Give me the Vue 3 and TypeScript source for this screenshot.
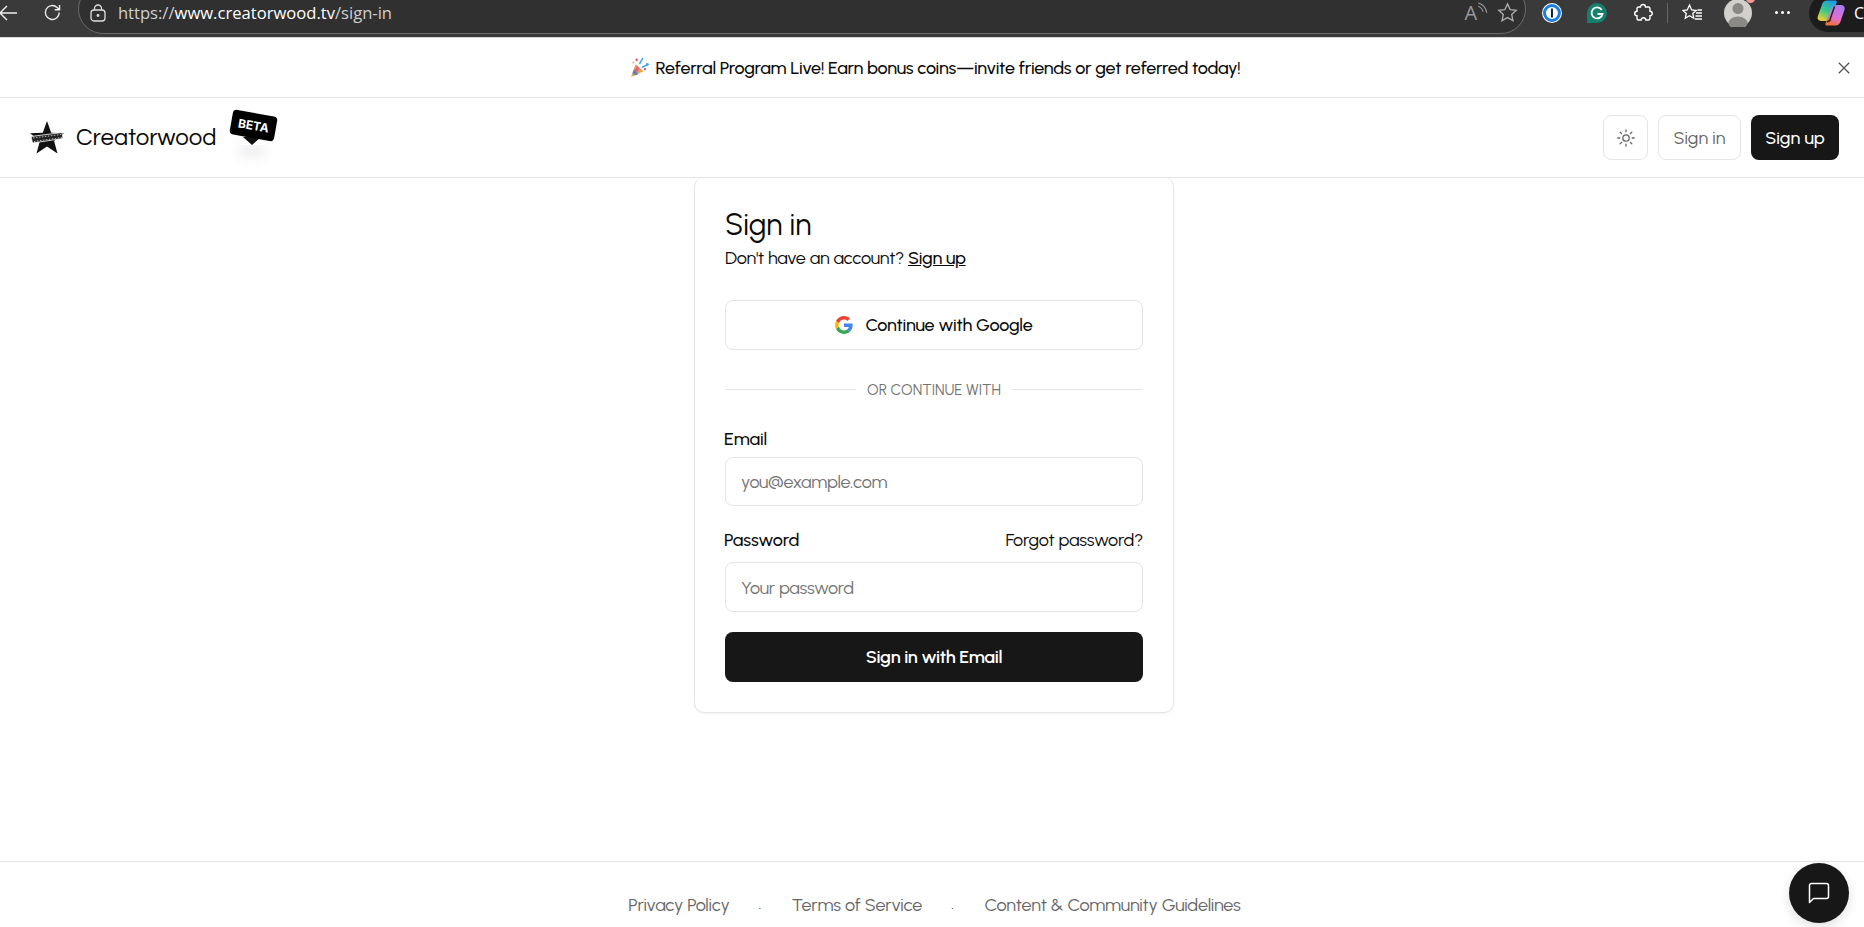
<script setup lang="ts">
const footerLinks: string[] = ['Privacy Policy', 'Terms of Service', 'Content & Community Guidelines']
</script>

<template>
  <div class="page">
    <header class="browser">
      <svg class="b-back" width="19" height="16" viewBox="0 0 19 16" fill="none" stroke="#eee" stroke-width="1.4"><path d="M18 8H1M8 1 1 8l7 7" /></svg>
      <svg class="b-reload" width="19" height="19" viewBox="0 0 18 18" fill="none" stroke="#eee" stroke-width="1.3"><path d="M15.4 9A6.6 6.6 0 1 1 13.3 4.200L15.500 6.200M15.700 1.800v4.600h-4.600" /></svg>
      <div class="address">
        <svg width="16" height="18" viewBox="0 0 16 18" fill="none" stroke="#ddd" stroke-width="1.3"><rect x="1" y="6" width="14" height="11" rx="3" /><path d="M4.500 6V4.500a3.500 3.500 0 0 1 7 0V6" /><circle cx="8" cy="11.500" r=".8" fill="#ddd" /></svg>
        <span class="url"><span class="dim">https://</span>www.creatorwood.tv<span class="dim">/sign-in</span></span>
        <span class="read">A<svg width="11" height="13" viewBox="0 0 10 12" fill="none" stroke="#999" stroke-width="1"><path d="M1 1c4 1 7 4 8 9M1 4c2 .7 3.800 2.500 4.500 5" /></svg></span>
        <svg width="21" height="21" viewBox="0 0 20 20" fill="none" stroke="#aaa" stroke-width="1.300"><path d="m10 1.800 2.500 5.400 5.800.7-4.300 4 1.200 5.800-5.200-2.900-5.200 2.900 1.200-5.800-4.300-4 5.800-.7z" /></svg>
      </div>
      <svg class="b-pass" width="20" height="20" viewBox="0 0 20 20"><circle cx="10" cy="10" r="10" fill="#fff" /><circle cx="10" cy="10" r="7.500" fill="none" stroke="#1a7de0" stroke-width="3" /><rect x="9" y="5.500" width="2" height="9" fill="#123" /></svg>
      <svg class="b-gram" width="20" height="20" viewBox="0 0 20 20"><path d="M10 0a10 10 0 1 1 0 20H0V10A10 10 0 0 1 10 0z" fill="#15806b" /><path d="M14.800 7A5.500 5.500 0 1 0 15.500 11H10.500" fill="none" stroke="#fff" stroke-width="1.800" /></svg>
      <svg class="b-ext" width="20" height="20" viewBox="0 0 20 20" fill="none" stroke="#fff" stroke-width="1.400"><path d="M7.500 4a2.500 2.500 0 0 1 5 0h3a1.500 1.500 0 0 1 1.500 1.500v2.700a2.300 2.300 0 0 1 0 4.600v2.700a1.500 1.500 0 0 1-1.500 1.500h-2.700a2.300 2.300 0 0 0-4.600 0H5.500A1.500 1.500 0 0 1 4 15.500v-2.700a2.300 2.300 0 0 1 0-4.600V5.500A1.500 1.500 0 0 1 5.500 4z" /></svg>
      <span class="b-div"></span>
      <svg class="b-fav" width="21" height="20" viewBox="0 0 21 20" fill="none" stroke="#fff" stroke-width="1.300"><path d="M7.500 2 9.700 7l4.500.5-3.400 3 1 4.800-4.300-2.500-4.200 2.500 1-4.800L1 7.500 5.300 7z" /><path d="M14 10h6M13.500 13h6.500M13 16h7M15.500 7h4.500" /></svg>
      <div class="b-avatar">
        <svg width="28" height="28" viewBox="0 0 28 28"><circle cx="14" cy="14" r="14" fill="#d2d0cd" /><circle cx="14" cy="9.500" r="5.500" fill="#8b8985" /><ellipse cx="14" cy="24" rx="9.500" ry="6.500" fill="#8b8985" /></svg>
        <span class="b-dot"></span>
      </div>
      <span class="b-more"><i></i><i></i><i></i></span>
      <div class="copilot">
        <svg width="28" height="26" viewBox="0 0 28 26"><defs><linearGradient id="c1" x1="0.700" y1="0" x2="0.200" y2="1"><stop offset="0" stop-color="#1f9be8" /><stop offset=".5" stop-color="#35c98a" /><stop offset="1" stop-color="#f5cf2e" /></linearGradient><linearGradient id="c2" x1="0.700" y1="0" x2="0.300" y2="1"><stop offset="0" stop-color="#a77cf2" /><stop offset=".6" stop-color="#e36ed0" /><stop offset="1" stop-color="#f0702f" /></linearGradient></defs><path d="M10 .5h8.500c1.200 0 1.500 1 1 2.200L14 18.800c-.6 1.500-1.600 2.200-3 2.200H4.500C1.500 21 0 19 .8 16.300L5 4.500C5.800 2 7.500.5 10 .5z" fill="url(#c1)" /><path d="M20.500 5H24c2.800 0 4.300 2 3.500 4.700l-4 11.800c-.8 2.800-2.500 4-5 4h-9c-1.200 0-1.400-1-1-2.200L14.500 8c.8-2 3-3 6-3z" fill="url(#c2)" /><path d="M17.500 6.500 13.500 18c-.4 1.200-.3 1.800-.5 2.500L10 22" fill="none" stroke="#222" stroke-width="1.500" /></svg>
        <span>C</span>
      </div>
    </header>

    <div class="banner">
      <div class="banner-msg">
        <svg width="20" height="21" viewBox="0 0 18 19"><path d="M5 6.500 12 13 1 18z" fill="#e8a33d" /><path d="M3.500 11l4 4.500-3 1.300-2.300-2.300z" fill="#5b7fc7" /><path d="M6.500 8l2 2-2.500 4-2-2z" fill="#e25f8f" /><circle cx="6" cy="2.500" r="1.100" fill="#e8447a" /><circle cx="3" cy="5" r=".9" fill="#f2b134" /><circle cx="15.500" cy="6.500" r="1.100" fill="#3fa4e8" /><circle cx="13.500" cy="11" r="1" fill="#e8447a" /><path d="M8.500 6.500 11.500 1M10.500 9.500 17 6.500" stroke="#3fa4e8" stroke-width="1.300" /></svg>
        <span>Referral Program Live! Earn bonus coins—invite friends or get referred today!</span>
      </div>
      <svg class="banner-close" width="12" height="12" viewBox="0 0 12 12" fill="none" stroke="#555" stroke-width="1.300"><path d="M.8.800l10.400 10.400M11.200.800.8 11.200" /></svg>
    </div>

    <nav class="nav">
      <div class="brand">
        <svg class="star" width="34" height="33" viewBox="0 0 34 33"><path d="M17 0l4.200 11.800L34 12.300l-9.900 7.800 3.400 12.500L17 25.500 6.500 32.600l3.400-12.500L0 12.300l12.800-.5z" fill="#111" /><path d="M1 15.500 32 11.500l1 6L2.500 22z" fill="#222" stroke="#fff" stroke-width=".8" /><path d="M3 17 31 13.500M4 20.500 32 16.500" stroke="#ddd" stroke-width=".8" stroke-dasharray="1.500 1.500" /></svg>
        <span class="brand-name">Creatorwood</span>
        <div class="beta">
          <span class="beta-shadow"></span>
          <span class="beta-tail"></span>
          <span class="beta-tag">BETA</span>
        </div>
      </div>
      <div class="nav-actions">
        <button class="btn-outline theme" type="button">
          <svg width="18" height="18" viewBox="0 0 18 18" fill="none" stroke="#666" stroke-width="1.300" stroke-linecap="round"><circle cx="9" cy="9" r="3.200" /><path d="M9 .8v2M9 15.200v2M.8 9h2M15.200 9h2M3.200 3.200l1.400 1.400M13.400 13.400l1.400 1.400M3.200 14.800l1.400-1.400M13.400 4.600l1.400-1.400" /></svg>
        </button>
        <button class="btn-outline signin" type="button">Sign in</button>
        <button class="btn-dark signup" type="button">Sign up</button>
      </div>
    </nav>

    <main class="main">
      <section class="card">
        <h1>Sign in</h1>
        <p class="sub">Don't have an account? <a>Sign up</a></p>
        <button class="google" type="button">
          <svg width="18" height="18" viewBox="0 0 48 48"><path fill="#EA4335" d="M24 9.500c3.500 0 6.700 1.200 9.200 3.600l6.900-6.900C35.900 2.400 30.500 0 24 0 14.600 0 6.500 5.400 2.600 13.200l8 6.200C12.500 13.700 17.800 9.500 24 9.500z" /><path fill="#4285F4" d="M46.900 24.500c0-1.600-.1-3.100-.4-4.500H24v9h12.900c-.6 3-2.200 5.500-4.800 7.200l7.700 6c4.500-4.200 7.100-10.300 7.100-17.700z" /><path fill="#FBBC05" d="M10.500 28.600c-.5-1.400-.8-3-.8-4.600s.3-3.200.8-4.600l-8-6.200C.9 16.500 0 20.100 0 24s.9 7.500 2.600 10.800z" /><path fill="#34A853" d="M24 48c6.500 0 11.900-2.100 15.900-5.800l-7.700-6c-2.200 1.500-5 2.300-8.200 2.300-6.200 0-11.500-4.200-13.400-9.900l-8 6.200C6.500 42.600 14.600 48 24 48z" /></svg>
          <span>Continue with Google</span>
        </button>
        <div class="divider"><span>OR CONTINUE WITH</span></div>
        <label class="lbl lbl-email">Email</label>
        <input class="field" type="text" placeholder="you@example.com" />
        <div class="lbl-row">
          <label class="lbl">Password</label>
          <a class="forgot">Forgot password?</a>
        </div>
        <input class="field" type="text" placeholder="Your password" />
        <button class="btn-dark submit" type="button">Sign in with Email</button>
      </section>
    </main>

    <footer class="footer">
      <template v-for="(link, i) in footerLinks" :key="link">
        <span v-if="i > 0" class="sep">.</span>
        <a>{{ link }}</a>
      </template>
    </footer>

    <button class="chat" type="button" aria-label="Chat">
      <svg width="22" height="22" viewBox="0 0 22 22" fill="none" stroke="#fff" stroke-width="1.500" stroke-linejoin="round"><path d="M1.500 20.500V3.500a2 2 0 0 1 2-2h15a2 2 0 0 1 2 2v11a2 2 0 0 1-2 2H5.500z" /></svg>
    </button>
  </div>
</template>

<style>
html, body { margin: 0; background: #fff; overflow: hidden; }
</style>

<style scoped>
.page {
  position: relative;
  display: flex;
  flex-direction: column;
  width: 1864px;
  height: 927px;
  overflow: hidden;
  font-family: "Urbanist", "Lato", "Noto Sans", sans-serif;
  color: #0a0a0a;
  background: #fff;
}
a { cursor: pointer; }
button { font-family: inherit; cursor: pointer; }

.browser {
  flex: 0 0 38px;
  box-sizing: border-box;
  display: flex;
  align-items: center;
  height: 38px;
  padding-bottom: 12px;
  background: #3a3a3a;
  border-bottom: 1px solid #d9d9d9;
  overflow: hidden;
}
.b-back { margin-left: -1px; }
.b-reload { margin-left: 25px; }
.address {
  box-sizing: border-box;
  display: flex;
  align-items: center;
  width: 1451px;
  height: 50px;
  margin-top: -7px;
  margin-left: 16px;
  padding: 7px 7px 0 11px;
  border: 1px solid #6b6b6b;
  border-radius: 26px;
  background: #303030;
}
.url {
  flex: 1;
  margin-left: 12px;
  font: 16.6px/18px "Open Sans", sans-serif;
  color: #fff;
}
.dim { color: #cfcfcf; }
.read {
  display: flex;
  align-items: flex-start;
  margin-right: 9px;
  font: 20px/22px "Open Sans", sans-serif;
  color: #999;
}
.b-pass { margin-left: 16px; }
.b-gram { margin-left: 25px; }
.b-ext { margin-left: 26px; }
.b-div { width: 1px; height: 20px; margin-left: 14px; background: #666; }
.b-fav { margin-left: 14px; }
.b-avatar { position: relative; width: 28px; height: 28px; margin-left: 21px; }
.b-dot {
  position: absolute;
  top: -5px;
  right: -3px;
  width: 9px;
  height: 9px;
  border-radius: 50%;
  background: #f29a93;
}
.b-more { display: flex; gap: 3px; margin-left: 23px; }
.b-more i { width: 3px; height: 3px; border-radius: 50%; background: #fff; }
.copilot {
  display: flex;
  align-items: center;
  gap: 9px;
  height: 38px;
  margin-left: 19px;
  padding-left: 8px;
  flex: 1;
  border-radius: 19px 0 0 19px;
  background: #1c1c1c;
  color: #fff;
  font: 16px "Open Sans", sans-serif;
}

.banner {
  flex: 0 0 60px;
  box-sizing: border-box;
  display: flex;
  align-items: center;
  justify-content: center;
  position: relative;
  border-bottom: 1px solid #e5e5e5;
}
.banner-msg {
  display: flex;
  align-items: center;
  gap: 6px;
  font-size: 18px;
  letter-spacing: -0.28px;
  margin-left: 6px;
  font-weight: 500;
}
.banner-close { position: absolute; right: 14px; top: 24px; }

.nav {
  flex: 0 0 80px;
  box-sizing: border-box;
  display: flex;
  align-items: center;
  justify-content: space-between;
  padding: 0 25px 0 30px;
  border-bottom: 1px solid #e5e5e5;
}
.brand { display: flex; align-items: center; position: relative; }
.star { display: block; }
.brand-name {
  margin-left: 12px;
  font: 24px/30px "Questrial", "Lato", sans-serif;
  color: #0a0a0a;
}
.beta {
  position: absolute;
  left: 200px;
  top: -8px;
  width: 50px;
  height: 40px;
}
.beta-tag {
  position: absolute;
  left: 1px;
  top: 0;
  width: 45px;
  height: 25px;
  border-radius: 4px;
  background: #000;
  color: #fff;
  font: 700 12px/25px "Inter", sans-serif;
  text-align: center;
  transform: rotate(10deg);
}
.beta-tail {
  position: absolute;
  left: 13px;
  top: 24px;
  width: 0;
  height: 0;
  border-style: solid;
  border-width: 8px 9px 0;
  border-color: #111 transparent transparent;
}
.beta-shadow {
  position: absolute;
  left: 11px;
  top: 26px;
  width: 22px;
  height: 6px;
  box-shadow: 0 8px 14px rgba(60, 60, 90, 0.22);
}
.nav-actions { display: flex; gap: 10px; }
.btn-outline {
  box-sizing: border-box;
  height: 45px;
  border: 1px solid #e5e5e5;
  border-radius: 8px;
  background: #fff;
  color: #666;
  font-size: 18px;
}
.theme { display: flex; align-items: center; justify-content: center; width: 45px; padding: 0; }
.signin { width: 83px; padding: 0; }
.btn-dark {
  box-sizing: border-box;
  height: 45px;
  border: 0;
  border-radius: 8px;
  background: #171717;
  color: #fff;
  font-size: 18px;
  font-weight: 500;
}
.signup { width: 88px; padding: 0; }

.main { flex: 1; display: flex; justify-content: center; align-items: flex-start; padding-left: 4px; }
.card {
  box-sizing: border-box;
  width: 480px;
  height: 536px;
  margin-top: -1px;
  padding: 30px 30px 30px;
  border: 1px solid #e5e5e5;
  border-top: 0;
  border-radius: 10px;
  box-shadow: 0 1px 2px rgba(0, 0, 0, 0.05);
  display: flex;
  flex-direction: column;
}
h1 {
  margin: 0;
  font-size: 30px;
  line-height: 36px;
  font-weight: 400;
}
.sub {
  margin: 1px 0 0;
  font-size: 18px;
  line-height: 28px;
  letter-spacing: -0.24px;
}
.sub a { text-decoration: underline; font-weight: 500; }
.google {
  display: flex;
  align-items: center;
  justify-content: center;
  gap: 12px;
  box-sizing: border-box;
  height: 50px;
  margin-top: 28px;
  padding: 0;
  border: 1px solid #e5e5e5;
  border-radius: 8px;
  background: #fff;
  color: #0a0a0a;
  font-size: 18px;
  font-weight: 500;
  letter-spacing: -0.22px;
}
.divider {
  display: flex;
  align-items: center;
  gap: 11px;
  height: 20px;
  margin-top: 30px;
  font-size: 15px;
  color: #737373;
}
.divider::before, .divider::after { content: ""; flex: 1; height: 1px; background: #e5e5e5; }
.lbl { font-size: 18px; line-height: 24px; font-weight: 500; letter-spacing: -0.05px; margin-left: -1px; }
.lbl-email { margin-top: 27px; margin-bottom: 6px; }
.lbl-row {
  display: flex;
  justify-content: space-between;
  align-items: center;
  height: 24px;
  margin-top: 22px;
  margin-bottom: 10px;
}
.forgot { font-size: 18px; line-height: 24px; letter-spacing: -0.2px; }
.field {
  box-sizing: border-box;
  width: 100%;
  height: 50px;
  padding: 1px 15px 0;
  border: 1px solid #e5e5e5;
  border-radius: 8px;
  outline: 0;
  font-family: inherit;
  font-size: 18px;
  letter-spacing: -0.28px;
  background: #fff;
}
.field::placeholder { color: #737373; opacity: 1; }
.submit { height: 50px; margin-top: 20px; padding: 0; letter-spacing: -0.32px; font-weight: 600; }

.footer {
  flex: 0 0 66px;
  box-sizing: border-box;
  display: flex;
  align-items: center;
  justify-content: center;
  gap: 29.2px;
  padding: 20px 0 0 5px;
  border-top: 1px solid #e5e5e5;
  font-size: 18px;
  letter-spacing: -0.2px;
  color: #666;
}
.sep { font-size: 14px; width: 4px; color: #333; }
.chat {
  position: absolute;
  left: 1789px;
  top: 863px;
  display: flex;
  align-items: center;
  justify-content: center;
  width: 60px;
  height: 60px;
  padding: 0;
  border: 0;
  border-radius: 50%;
  background: #171717;
  box-shadow: 0 4px 12px rgba(0, 0, 0, 0.12);
}
</style>
